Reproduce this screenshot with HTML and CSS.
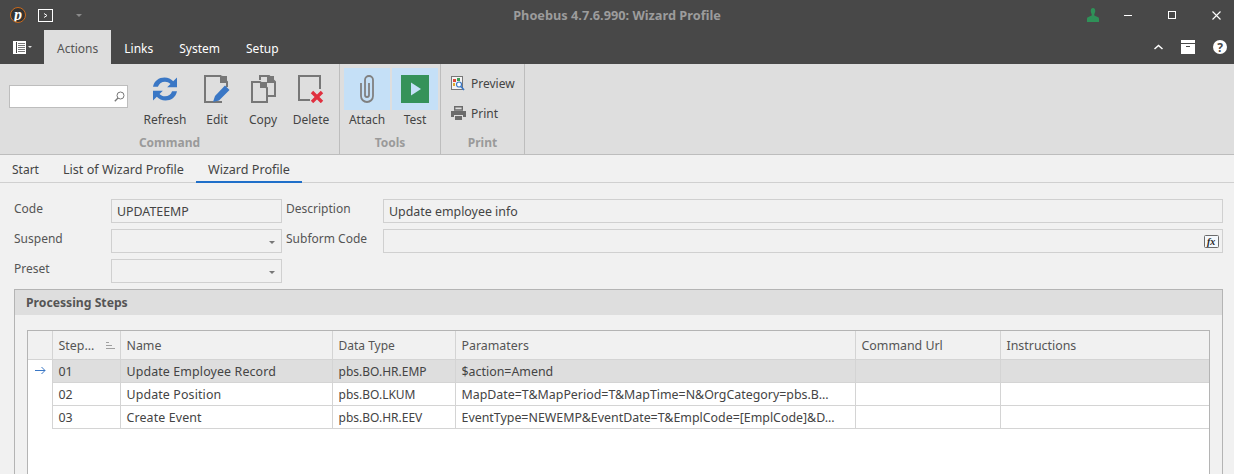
FILE: index.html
```html
<!DOCTYPE html>
<html lang="en">
<head>
    <meta charset="UTF-8">
    <meta name="viewport" content="width=device-width, initial-scale=1.0">
    <title>Phoebus - Wizard Profile</title>
    <link rel="stylesheet" href="styles.css">
</head>
<body>
    <!-- Title bar -->
    <div class="titlebar">
        <div class="quick">
            <span class="logo"><span class="logo-p">p</span></span>
            <svg class="console" width="15" height="13" viewBox="0 0 15 13"><rect x="0.5" y="0.5" width="14" height="12" fill="none" stroke="#fff"/><path d="M6 4.500 9 6.500 6 8.500" fill="none" stroke="#fff"/></svg>
            <span class="quick-arrow"></span>
        </div>
        <div class="app-title">Phoebus 4.7.6.990: Wizard Profile</div>
        <div class="winbtns">
            <svg class="user" width="12" height="14" viewBox="0 0 14 15" preserveAspectRatio="none"><path d="M7 0C5 0 4.200 1.500 4.400 3.500 4.500 5 5.200 6 5.500 6.800V8L1 10C.2 10.400 0 11 0 12V15H14V12C14 11 13.800 10.400 13 10L8.500 8V6.800C8.800 6 9.500 5 9.600 3.500 9.800 1.500 9 0 7 0Z" fill="#2f9158"/></svg>
            <svg class="minimize" width="8" height="1" viewBox="0 0 8 1"><rect width="8" height="1" fill="#fff"/></svg>
            <svg class="maximize" width="8" height="8" viewBox="0 0 8 8"><rect x="0.5" y="0.5" width="7" height="7" fill="none" stroke="#fff"/></svg>
            <svg class="close" width="9" height="9" viewBox="0 0 9 9"><path d="M.5.500 8.500 8.500M8.500.500.5 8.500" stroke="#fff" stroke-width="1.100"/></svg>
        </div>
    </div>

    <!-- Menu tabs -->
    <div class="menubar">
        <div class="app-menu">
            <svg width="13" height="13" viewBox="0 0 13 13"><rect width="13" height="13" fill="#fff"/><rect x="3" y="1" width="1" height="11" fill="#484848"/><path d="M5 2.500H12M5 4.500H12M5 6.500H12M5 8.500H12M5 10.500H12" stroke="#777"/></svg>
            <span class="app-menu-arrow"></span>
        </div>
        <div class="menu-tab active">Actions</div>
        <div class="menu-tab">Links</div>
        <div class="menu-tab">System</div>
        <div class="menu-tab">Setup</div>
        <div class="menu-right">
            <svg width="9" height="6" viewBox="0 0 9 6"><path d="M.5 5 4.500 1.500 8.500 5" fill="none" stroke="#fff" stroke-width="1.500"/></svg>
            <svg class="archive" width="14" height="14" viewBox="0 0 14 14"><rect width="14" height="3" fill="#fff"/><path d="M0 4H14V14H0ZM5 6V7H9V6Z" fill="#fff" fill-rule="evenodd"/></svg>
            <svg width="14" height="14" viewBox="0 0 14 14"><circle cx="7" cy="7" r="7" fill="#fff"/><text x="7" y="11.500" class="help-mark">?</text></svg>
        </div>
    </div>

    <!-- Ribbon -->
    <div class="ribbon">
        <div class="group group-command">
            <div class="group-items">
                <div class="search">
                    <svg width="11" height="11" viewBox="0 0 11 11"><circle cx="6.500" cy="4.500" r="3.500" fill="none" stroke="#777"/><path d="M4 7 .8 10.200" stroke="#777" stroke-width="1.300"/></svg>
                </div>
                <div class="big-btn btn-refresh">
                    <svg class="icon-refresh" width="24" height="24" viewBox="2 2.500 22 21"><path d="M2 11C3 5.500 7.500 2.500 12.500 2.500 16 2.500 18.500 4 20.500 6L24 2.500V11.500H15L18 8.500C16.500 7 15 6.300 13 6.300 10 6.300 7.500 8 6.500 11ZM24 15C23 20.500 18.500 23.500 13.500 23.500 10 23.500 7.500 22 5.500 20L2 23.500V14.500H11L8 17.500C9.500 19 11 19.700 13 19.700 16 19.700 18.500 18 19.500 15Z" fill="#3a77c5"/></svg>
                    <span class="big-label">Refresh</span>
                </div>
                <div class="big-btn btn-edit">
                    <svg width="26" height="28" viewBox="0 0 26 28"><path d="M17 1H1V27H18" fill="none" stroke="#777" stroke-width="2"/><path d="M17 1 23 7V12" fill="none" stroke="#777" stroke-width="2"/><path d="M16 1H23V8H16Z" fill="#777"/><path d="M9 27 11 21 21 10.500 25.500 15 15 25.500Z" fill="#3a77c5"/></svg>
                    <span class="big-label">Edit</span>
                </div>
                <div class="big-btn btn-copy">
                    <svg width="25" height="28" viewBox="0 0 25 28"><path d="M9 5V1H18L24 7V21H16" fill="none" stroke="#777" stroke-width="2"/><path d="M16 1H23V8H16Z" fill="#777"/><path d="M9 7H1V27H16V13Z" fill="#dedede" stroke="#777" stroke-width="2"/><path d="M9 7H16V13H9Z" fill="#777"/></svg>
                    <span class="big-label">Copy</span>
                </div>
                <div class="big-btn btn-delete">
                    <svg width="26" height="28" viewBox="0 0 26 28"><path d="M12 25H1V1H22V14" fill="none" stroke="#777" stroke-width="2"/><path d="M14 17 24 27M24 17 14 27" stroke="#e0303f" stroke-width="3.400"/></svg>
                    <span class="big-label">Delete</span>
                </div>
            </div>
            <div class="group-title">Command</div>
        </div>
        <div class="group group-tools">
            <div class="group-items">
                <div class="big-btn checked">
                    <svg width="14" height="28" viewBox="0 0 14 28"><path d="M1 8V21A6 6 0 0 0 13 21V5A4 4 0 0 0 5 5V20A2 2 0 0 0 9 20V8" fill="none" stroke="#808080" stroke-width="1.800"/></svg>
                    <span class="big-label">Attach</span>
                </div>
                <div class="big-btn checked">
                    <svg width="28" height="28" viewBox="0 0 28 28"><rect width="28" height="28" fill="#35925a"/><path d="M10 7.500 20 14 10 20.500Z" fill="#c5e0f7"/></svg>
                    <span class="big-label">Test</span>
                </div>
            </div>
            <div class="group-title">Tools</div>
        </div>
        <div class="group group-print">
            <div class="small-btns">
                <div class="small-btn">
                    <svg width="14" height="15" viewBox="0 0 14 15"><rect x="0.500" y="0.500" width="11" height="13" fill="#f4f4f4" stroke="#777"/><rect x="2" y="3" width="3" height="3" fill="#d9483b"/><rect x="6" y="2" width="3" height="3" fill="#3f9d55"/><rect x="2" y="7" width="2" height="3" fill="#e0a92e"/><circle cx="8" cy="8.500" r="2.500" fill="#fff" stroke="#3a77c5" stroke-width="1.200"/><path d="M10 10.500 13 14" stroke="#3a77c5" stroke-width="1.600"/></svg>
                    <span>Preview</span>
                </div>
                <div class="small-btn small-btn-print">
                    <svg width="15" height="14" viewBox="0 0 15 14"><path d="M3.700.7H11.300V4H3.700Z" fill="none" stroke="#6b6b6b" stroke-width="1.400"/><path d="M0 5H15V11H12V9H3V11H0Z" fill="#6b6b6b"/><path d="M4 10H11V14H4Z" fill="#6b6b6b"/></svg>
                    <span>Print</span>
                </div>
            </div>
            <div class="group-title">Print</div>
        </div>
    </div>

    <!-- Document tabs -->
    <div class="doc-tabs">
        <div class="doc-tab doc-tab-start">Start</div>
        <div class="doc-tab">List of Wizard Profile</div>
        <div class="doc-tab active">Wizard Profile</div>
    </div>

    <div class="content">
        <div class="form">
            <label class="form-label">Code</label>
            <div class="field"><span>UPDATEEMP</span></div>
            <label class="form-label form-label-2">Description</label>
            <div class="field"><span>Update employee info</span></div>

            <label class="form-label">Suspend</label>
            <div class="field field-combo"><span class="combo-arrow"></span></div>
            <label class="form-label form-label-2">Subform Code</label>
            <div class="field field-fx">
                <svg width="15" height="13" viewBox="0 0 15 13"><rect x="0.500" y="0.500" width="14" height="12" rx="1" fill="#f4f8fc" stroke="#6b6b6b"/><text x="3" y="10" class="fx-mark">fx</text></svg>
            </div>

            <label class="form-label">Preset</label>
            <div class="field field-combo"><span class="combo-arrow"></span></div>
        </div>

        <div class="groupbox">
            <div class="groupbox-head">Processing Steps</div>
            <div class="groupbox-body">
                <div class="grid">
                    <table>
                        <colgroup>
                            <col class="col-ind">
                            <col class="col-step">
                            <col class="col-name">
                            <col class="col-type">
                            <col class="col-param">
                            <col class="col-url">
                            <col>
                        </colgroup>
                        <thead>
                            <tr>
                                <th class="ind"></th>
                                <th><div class="step-head">Step...
                                    <svg width="9" height="7" viewBox="0 0 9 7"><path d="M0 .5H3M0 3.500H6M0 6.500H9" stroke="#a0a0a0"/></svg>
                                </div></th>
                                <th>Name</th>
                                <th class="cell-type">Data Type</th>
                                <th>Paramaters</th>
                                <th>Command Url</th>
                                <th>Instructions</th>
                            </tr>
                        </thead>
                        <tbody>
                            <tr class="selected">
                                <td class="ind"><svg width="11" height="9" viewBox="0 0 11 9"><path d="M0 4.500H10M6.500 1 10 4.500 6.500 8" fill="none" stroke="#3a77c5"/></svg></td>
                                <td>01</td>
                                <td class="cell-name">Update Employee Record</td>
                                <td class="cell-type">pbs.BO.HR.EMP</td>
                                <td>$action=Amend</td>
                                <td></td>
                                <td></td>
                            </tr>
                            <tr>
                                <td class="ind"></td>
                                <td>02</td>
                                <td class="cell-name">Update Position</td>
                                <td class="cell-type">pbs.BO.LKUM</td>
                                <td>MapDate=T&amp;MapPeriod=T&amp;MapTime=N&amp;OrgCategory=pbs.B...</td>
                                <td></td>
                                <td></td>
                            </tr>
                            <tr>
                                <td class="ind"></td>
                                <td>03</td>
                                <td class="cell-name">Create Event</td>
                                <td class="cell-type">pbs.BO.HR.EEV</td>
                                <td>EventType=NEWEMP&amp;EventDate=T&amp;EmplCode=[EmplCode]&amp;D...</td>
                                <td></td>
                                <td></td>
                            </tr>
                        </tbody>
                    </table>
                </div>
            </div>
        </div>
    </div>
</body>
</html>
```

FILE: styles.css
```css
html, body {
    height: 474px;
    overflow: hidden;
}
body {
    margin: 0;
    font-family: "Noto Sans", "Open Sans", sans-serif;
    font-size: 12px;
    color: #444;
    background-color: #f1f1f1;
}

/* title bar */
.titlebar {
    display: grid;
    grid-template-columns: 1fr auto 1fr;
    align-items: center;
    height: 30px;
    background: #484848;
}
.quick {
    display: flex;
    align-items: center;
    padding-left: 10px;
}
.logo {
    display: flex;
    align-items: center;
    justify-content: center;
    width: 16px;
    height: 16px;
    box-sizing: border-box;
    border-radius: 50%;
    background: #333;
    border: 1.5px solid #c96a1c;
    overflow: hidden;
}
.logo-p {
    font-family: "Liberation Serif", serif;
    font-style: italic;
    font-weight: bold;
    font-size: 16px;
    line-height: 14px;
    color: #fff;
}
.console {
    margin-left: 12px;
}
.quick-arrow {
    width: 0;
    height: 0;
    margin-left: 23px;
    border-left: 3px solid transparent;
    border-right: 3px solid transparent;
    border-top: 3px solid #8a8a8a;
}
.app-title {
    font-weight: bold;
    color: #9c9c9c;
    font-size: 12.75px;
}
.winbtns {
    display: flex;
    align-items: center;
    justify-content: flex-end;
    padding-right: 13px;
}
.minimize {
    margin-left: 25px;
}
.maximize {
    margin-left: 36px;
}
.close {
    margin-left: 36px;
}

/* menu tabs */
.menubar {
    display: flex;
    align-items: stretch;
    height: 34px;
    background: #484848;
}
.app-menu {
    display: flex;
    align-items: center;
    width: 44px;
    padding-left: 13px;
    box-sizing: border-box;
}
.app-menu-arrow {
    width: 0;
    height: 0;
    margin-left: 2px;
    border-left: 2px solid transparent;
    border-right: 2px solid transparent;
    border-top: 2px solid #ddd;
}
.menu-tab {
    display: flex;
    align-items: center;
    justify-content: center;
    padding: 2px 13px 0;
    color: #fff;
}
.menu-tab.active {
    background: #dedede;
    color: #555;
}
.menu-right {
    display: flex;
    align-items: center;
    gap: 18px;
    margin-left: auto;
    padding-right: 7px;
}
.help-mark {
    font-family: "Noto Sans", sans-serif;
    font-weight: bold;
    font-size: 12px;
    text-anchor: middle;
    fill: #484848;
}

/* ribbon */
.ribbon {
    display: flex;
    height: 90px;
    background: #dedede;
    border-bottom: 1px solid #bdbdbd;
}
.group {
    display: flex;
    flex-direction: column;
    border-right: 1px solid #bdbdbd;
    box-sizing: border-box;
}
.group-command {
    width: 340px;
}
.group-tools {
    width: 101px;
}
.group-print {
    width: 84px;
}
.group-items {
    display: flex;
    height: 67px;
    padding-top: 4px;
    box-sizing: border-box;
}
.group-tools .group-items {
    gap: 2px;
    padding-left: 4px;
}
.group-title {
    margin-top: 3px;
    text-align: center;
    font-weight: bold;
    font-size: 12px;
    color: #9a9a9a;
}
.search {
    display: flex;
    flex: none;
    align-items: center;
    justify-content: flex-end;
    width: 119px;
    height: 23px;
    margin: 17px 11px 0 9px;
    padding-right: 2px;
    box-sizing: border-box;
    background: #fff;
    border: 1px solid #bdbdbd;
}
.big-btn {
    display: flex;
    flex: none;
    flex-direction: column;
    align-items: center;
    justify-content: space-between;
    height: 60px;
    padding-top: 4px;
    box-sizing: border-box;
}
.big-btn svg {
    flex: none;
    margin-top: 3px;
}
.btn-refresh {
    width: 52px;
}
.btn-refresh svg {
    margin-top: 5px;
}
.btn-edit {
    width: 52px;
}
.btn-copy {
    width: 40px;
}
.btn-delete {
    width: 56px;
}
.big-label {
    line-height: 17px;
    white-space: nowrap;
}
.big-btn.checked {
    width: 46px;
    padding: 0;
    background: linear-gradient(#c5e0f7 42px, #dedede 42px);
}
.big-btn.checked svg {
    margin-top: 7px;
}
.small-btns {
    display: flex;
    flex-direction: column;
    height: 67px;
    padding: 9px 0 0 10px;
    box-sizing: border-box;
    gap: 10px;
}
.small-btn {
    display: flex;
    align-items: center;
    gap: 6px;
    height: 20px;
}
.small-btn-print {
    gap: 5px;
}

/* document tabs */
.doc-tabs {
    display: flex;
    height: 27px;
    border-bottom: 1px solid #d0d0d0;
}
.doc-tab {
    display: flex;
    align-items: center;
    padding: 1px 12px 0;
    font-size: 12.6px;
}
.doc-tab-start {
    font-size: 12px;
}
.doc-tab.active {
    height: 28px;
    padding-top: 2px;
    box-sizing: border-box;
    border-bottom: 2px solid #1f6fc9;
}

/* form */
.content {
    height: 291px;
    padding: 16px 11px 0 14px;
    box-sizing: border-box;
    overflow: hidden;
}
.form {
    display: grid;
    grid-template-columns: 97px 171px 101px 1fr;
    grid-auto-rows: 24px;
    row-gap: 6px;
}
.form-label {
    line-height: 20px;
    color: #555;
}
.form-label-2 {
    padding-left: 4px;
}
.field {
    display: flex;
    align-items: center;
    padding: 0 5px;
    border: 1px solid #d0d0d0;
    box-sizing: border-box;
    font-size: 12.4px;
}
.field-combo {
    justify-content: flex-end;
}
.field-fx {
    justify-content: flex-end;
    padding-right: 3px;
}
.combo-arrow {
    width: 0;
    height: 0;
    margin-top: 2px;
    margin-right: 1px;
    border-left: 3px solid transparent;
    border-right: 3px solid transparent;
    border-top: 3px solid #777;
}
.fx-mark {
    font-family: "Liberation Serif", serif;
    font-style: italic;
    font-weight: bold;
    font-size: 10px;
    fill: #222;
}

/* processing steps */
.groupbox {
    margin-top: 6px;
    height: 220px;
    border: 1px solid #b4b4b4;
    box-sizing: border-box;
}
.groupbox-head {
    height: 25px;
    padding-left: 11px;
    line-height: 25px;
    font-weight: bold;
    font-size: 12.2px;
    color: #555;
    background: #dedede;
}
.groupbox-body {
    padding: 15px 12px 0;
}
.grid {
    height: 170px;
    border: 1px solid #b4b4b4;
    background: #fff;
    box-sizing: border-box;
}
.grid table {
    width: 100%;
    table-layout: fixed;
    border-collapse: collapse;
    font-size: 12.4px;
}
.col-ind {
    width: 24px;
}
.col-step {
    width: 68px;
}
.col-name {
    width: 212px;
}
.col-type {
    width: 123px;
}
.col-param {
    width: 400px;
}
.col-url {
    width: 145px;
}
.grid th {
    height: 28px;
    padding: 2px 6px 0;
    text-align: left;
    font-weight: normal;
    color: #555;
    background: #f1f1f1;
    border-left: 1px solid #d4d4d4;
    border-bottom: 1px solid #d4d4d4;
    box-sizing: border-box;
}
.grid th.ind {
    border-left: none;
}
.grid td {
    height: 23px;
    padding: 1px 6px 0;
    white-space: nowrap;
    overflow: hidden;
    border: 1px solid #d4d4d4;
    border-right: none;
    box-sizing: border-box;
}
.grid td.ind {
    padding: 0 0 0 7px;
    border: none;
}
.grid td.ind svg {
    display: block;
}
.grid .cell-name {
    letter-spacing: 0.13px;
}
.grid .cell-type {
    font-size: 12px;
}
.grid tr.selected td:not(.ind) {
    background: #dedede;
}
.step-head {
    display: flex;
    align-items: center;
    justify-content: space-between;
    margin-right: -1px;
}
```
